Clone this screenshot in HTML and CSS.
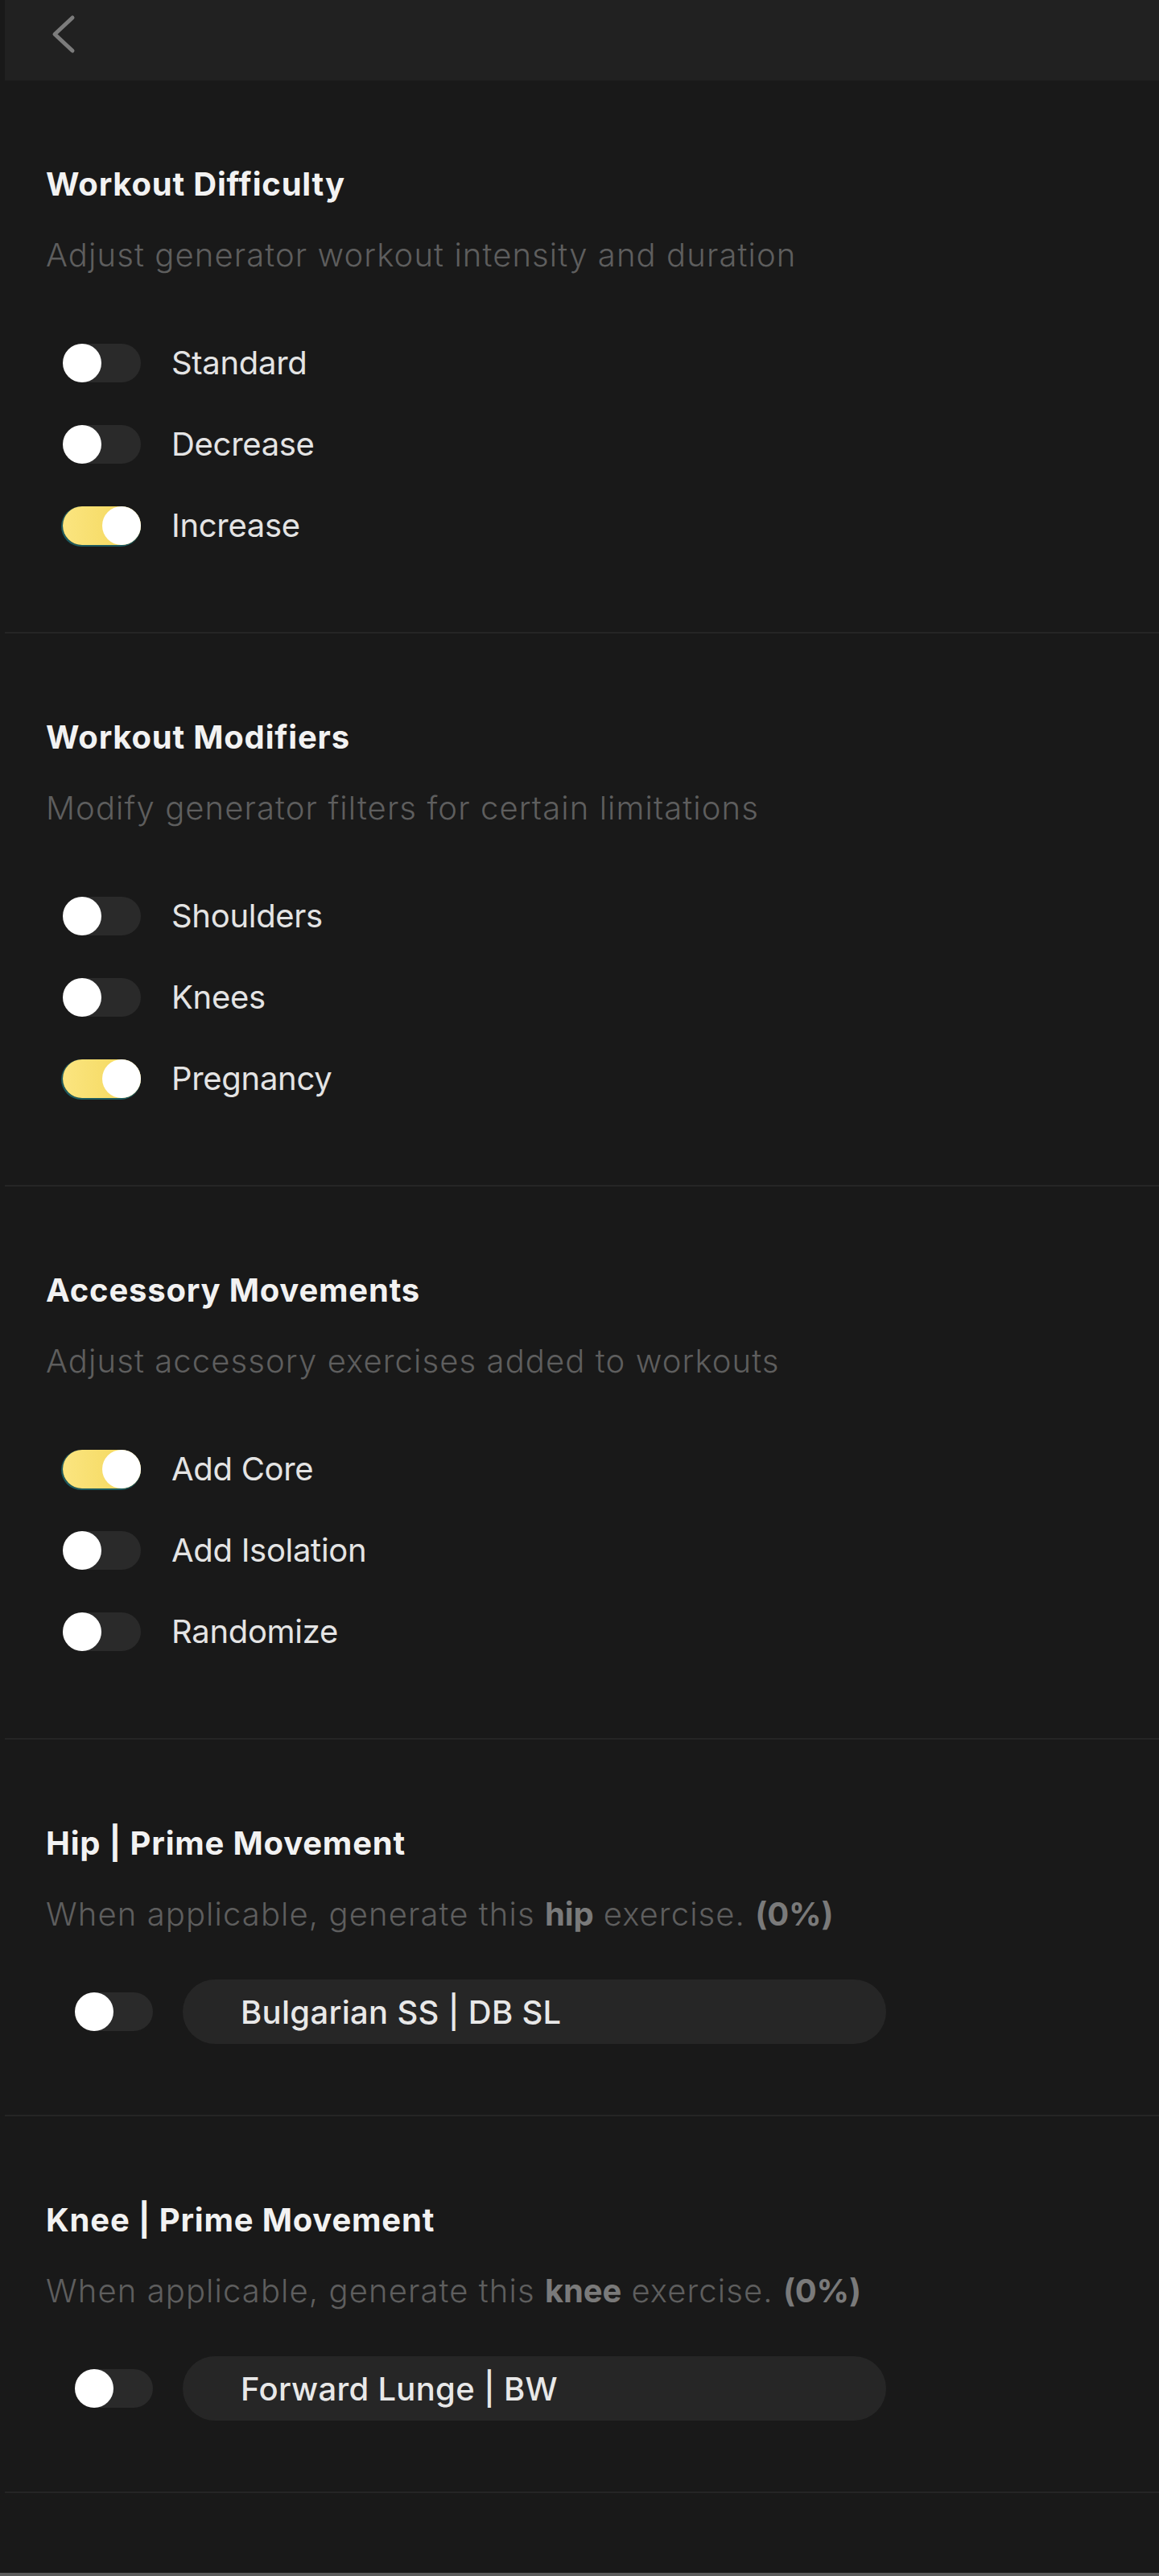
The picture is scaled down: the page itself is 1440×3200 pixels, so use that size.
FILE: index.html
```html
<!DOCTYPE html>
<html lang="en">
<head>
    <meta charset="UTF-8">
    <meta name="viewport" content="width=device-width, initial-scale=1.0">
    <title>Generator Settings</title>
    <link rel="stylesheet" href="styles.css">
</head>
<body>
    <div class="page">
        <!-- Top bar -->
        <header class="topbar">
            <button class="back-button" aria-label="Back">
                <svg class="back-icon" width="32" height="50" viewBox="0 0 32 50">
                    <path d="M28 5 L6 25.5 L28 46" fill="none" stroke="#7c7c7c" stroke-width="5" stroke-linecap="round" stroke-linejoin="round"/>
                </svg>
            </button>
        </header>

        <main class="settings">
            <!-- Workout Difficulty -->
            <section class="group">
                <h2 class="group-title">Workout Difficulty</h2>
                <p class="group-desc">Adjust generator workout intensity and duration</p>
                <ul class="options">
                    <li class="option"><span class="switch"></span><span class="option-label">Standard</span></li>
                    <li class="option"><span class="switch"></span><span class="option-label">Decrease</span></li>
                    <li class="option"><span class="switch on"></span><span class="option-label">Increase</span></li>
                </ul>
            </section>

            <!-- Workout Modifiers -->
            <section class="group">
                <h2 class="group-title">Workout Modifiers</h2>
                <p class="group-desc">Modify generator filters for certain limitations</p>
                <ul class="options">
                    <li class="option"><span class="switch"></span><span class="option-label">Shoulders</span></li>
                    <li class="option"><span class="switch"></span><span class="option-label">Knees</span></li>
                    <li class="option"><span class="switch on"></span><span class="option-label">Pregnancy</span></li>
                </ul>
            </section>

            <!-- Accessory Movements -->
            <section class="group">
                <h2 class="group-title">Accessory Movements</h2>
                <p class="group-desc">Adjust accessory exercises added to workouts</p>
                <ul class="options">
                    <li class="option"><span class="switch on"></span><span class="option-label">Add Core</span></li>
                    <li class="option"><span class="switch"></span><span class="option-label">Add Isolation</span></li>
                    <li class="option"><span class="switch"></span><span class="option-label">Randomize</span></li>
                </ul>
            </section>

            <!-- Hip -->
            <section class="group group-prime">
                <h2 class="group-title">Hip | Prime Movement</h2>
                <p class="group-desc">When applicable, generate this <strong>hip</strong> exercise. <strong>(0%)</strong></p>
                <div class="prime-row">
                    <span class="switch"></span>
                    <div class="prime-select">Bulgarian SS | DB SL</div>
                </div>
            </section>

            <!-- Knee -->
            <section class="group group-prime">
                <h2 class="group-title">Knee | Prime Movement</h2>
                <p class="group-desc">When applicable, generate this <strong>knee</strong> exercise. <strong>(0%)</strong></p>
                <div class="prime-row">
                    <span class="switch"></span>
                    <div class="prime-select">Forward Lunge | BW</div>
                </div>
            </section>
        </main>

        <div class="bottom-bar"></div>
    </div>
</body>
</html>
```

FILE: styles.css
```css
* {
    margin: 0;
    padding: 0;
    box-sizing: border-box;
}

body {
    background-color: #191919;
    color: #e6e6e6;
    font-family: 'Inter', 'Roboto', 'Liberation Sans', sans-serif;
}

.page {
    margin-left: 6px;
    min-height: 3200px;
    display: flex;
    flex-direction: column;
}

/* Top bar */
.topbar {
    height: 100px;
    background-color: #212121;
    padding: 17px 0 0 56px;
}

.back-button {
    background: none;
    border: none;
    display: block;
    cursor: pointer;
}

.back-icon {
    display: block;
}

/* Groups */
.settings {
    flex: 1;
}

.group {
    padding: 105px 0 108px 51px;
    border-bottom: 2px solid #252525;
}

.group-title {
    font-size: 40px;
    line-height: 48px;
    font-weight: 700;
    color: #f2f2f2;
    letter-spacing: 0.8px;
}

.group-desc {
    margin-top: 40px;
    font-size: 40px;
    line-height: 48px;
    font-weight: 300;
    color: #5e5e5e;
    letter-spacing: 1.1px;
}

.group-desc strong {
    font-weight: 700;
    color: #7a7a7a;
    letter-spacing: -0.2px;
}

/* Toggle options */
.options {
    list-style: none;
    margin-top: 86px;
    display: flex;
    flex-direction: column;
    gap: 53px;
}

.option {
    display: flex;
    align-items: center;
    height: 48px;
    padding-left: 21px;
}

.switch {
    position: relative;
    width: 97px;
    height: 48px;
    border-radius: 24px;
    background-color: #2a2a2a;
    flex-shrink: 0;
}

.switch::after {
    content: '';
    position: absolute;
    top: 0;
    left: 0;
    width: 48px;
    height: 48px;
    border-radius: 50%;
    background-color: #ffffff;
}

.switch.on {
    background: linear-gradient(90deg, #fbe580 0%, #f6dc68 60%, #f2d24c 100%);
    box-shadow: -1px 1px 0 1px #1d5a5e;
}

.switch.on::after {
    left: 49px;
}

.option-label {
    margin-left: 38px;
    font-size: 40px;
    line-height: 48px;
    font-weight: 400;
    color: #e4e4e4;
    letter-spacing: -0.3px;
}

/* Prime movement rows */
.group-prime {
    padding-bottom: 88px;
}

.prime-row {
    margin-top: 57px;
    display: flex;
    align-items: center;
    padding-left: 36px;
}

.prime-select {
    margin-left: 37px;
    width: 874px;
    height: 80px;
    border-radius: 40px;
    background-color: #262626;
    padding-left: 72px;
    display: flex;
    align-items: center;
    font-size: 40px;
    font-weight: 500;
    color: #e8e8e8;
    letter-spacing: 0.3px;
}

.bottom-bar {
    height: 4px;
    background-color: #5c5c5c;
    margin-left: -6px;
}
```
